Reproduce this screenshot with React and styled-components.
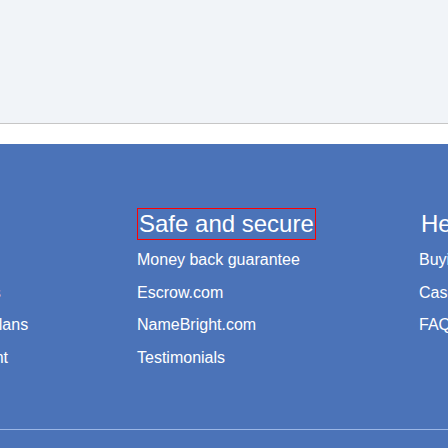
import React from 'react';
import styled, { createGlobalStyle } from 'styled-components';

const GlobalStyle = createGlobalStyle`
  body {
    margin: 0;
    background: #f1f4f8;
    font-family: 'Liberation Sans', Arial, sans-serif;
    overflow: hidden;
  }
`;

const TopArea = styled.div`
  height: 123px;
  background: #f1f4f8;
  border-bottom: 1px solid #c6c6c6;
`;

const Spacer = styled.div`
  height: 20px;
  background: #fff;
`;

const Footer = styled.footer`
  background: #4b73b8;
  padding-top: 64px;
  height: 240px;
`;

const Columns = styled.div`
  display: flex;
  margin-left: -145px;
  height: 221px;
  border-bottom: 1px solid #9cb7e6;
`;

const Column = styled.div`
  flex: 0 0 282px;
`;

const ColumnTitle = styled.h3`
  display: inline-block;
  margin: 0 0 10px;
  padding: 0 1px;
  font-size: 24px;
  font-weight: 400;
  line-height: 30px;
  color: #fff;
  white-space: nowrap;
  border: 1px solid ${({ $selected }) => ($selected ? '#ff0000' : 'transparent')};
`;

const LinkList = styled.ul`
  list-style: none;
  margin: 0;
  padding: 0;
`;

const LinkItem = styled.li`
  line-height: 20px;
  margin-bottom: 12.5px;
`;

const FooterLink = styled.a`
  color: #fff;
  font-size: 16px;
  text-decoration: none;
  white-space: nowrap;
`;

const columns = [
  {
    title: 'Domains',
    links: ['Buy now', 'Browse our domains', 'Available payment plans', 'Domain management'],
  },
  {
    title: 'Safe and secure',
    selected: true,
    links: ['Money back guarantee', 'Escrow.com', 'NameBright.com', 'Testimonials'],
  },
  {
    title: 'Help',
    links: ['Buying guide', 'Case studies', 'FAQ'],
  },
];

const App = () => {
  return (
    <>
      <GlobalStyle />
      <TopArea />
      <Spacer />
      <Footer>
        <Columns>
          {columns.map((col) => (
            <Column key={col.title}>
              <ColumnTitle $selected={col.selected}>{col.title}</ColumnTitle>
              <LinkList>
                {col.links.map((link) => (
                  <LinkItem key={link}>
                    <FooterLink href="#">{link}</FooterLink>
                  </LinkItem>
                ))}
              </LinkList>
            </Column>
          ))}
        </Columns>
      </Footer>
    </>
  );
};

export default App;
